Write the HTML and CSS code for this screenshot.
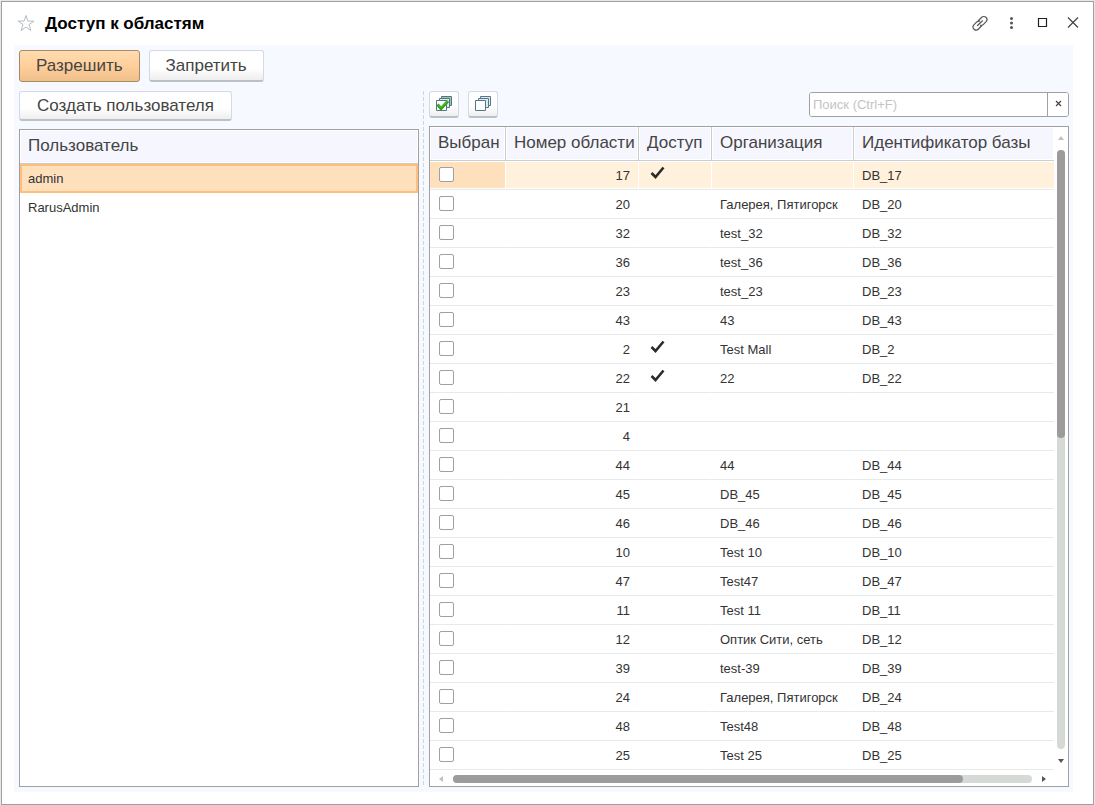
FILE: index.html
```html
<!DOCTYPE html>
<html lang="ru">
<head>
    <meta charset="UTF-8">
    <meta name="viewport" content="width=device-width, initial-scale=1.0">
    <title>Доступ к областям</title>
    <link rel="stylesheet" href="styles.css">
</head>
<body>
    <div class="window">
        <header class="titlebar">
            <button class="icon-button" type="button" aria-label="В избранное">
                <svg width="18" height="18" viewBox="0 0 18 18" fill="none" stroke="#b4bcc4"><path d="M9 0.500l1.900 5.600h6L12 9.600l1.900 5.900L9 12 4.100 15.500 6 9.600 1.100 6.100h6z"/></svg>
            </button>
            <h1>Доступ к областям</h1>
            <div class="window-tools">
                <button class="icon-button" type="button" aria-label="Ссылка">
                    <svg width="18" height="18" viewBox="0 0 18 18" fill="none" stroke="#555" stroke-width="1.2" stroke-linecap="round"><path d="M7.500 5.500l3-3a3 3 0 0 1 4.600 4.200L12 9.800c-.8.6-1.600.8-2.500.6M10.500 11l-3 3a3 3 0 0 1-4.600-4.200L6 6.700c.8-.6 1.600-.8 2.500-.6M6.500 10.500l5-4.700"/></svg>
                </button>
                <button class="icon-button" type="button" aria-label="Ещё">
                    <svg width="18" height="18" viewBox="0 0 18 18" fill="#555"><circle cx="9.500" cy="3.500" r="1.500"/><circle cx="9.500" cy="8" r="1.500"/><circle cx="9.500" cy="12.500" r="1.500"/></svg>
                </button>
                <button class="icon-button" type="button" aria-label="Развернуть">
                    <svg width="18" height="18" viewBox="0 0 18 18" fill="none" stroke="#222" stroke-width="1.200"><path d="M5.500 3.500h8v8h-8z"/></svg>
                </button>
                <button class="icon-button" type="button" aria-label="Закрыть">
                    <svg width="18" height="18" viewBox="0 0 18 18" fill="none" stroke="#444" stroke-width="1.200"><path d="M4 2.500l10 10M14 2.500l-10 10"/></svg>
                </button>
            </div>
        </header>

        <main class="panel">
            <div class="commands">
                <button class="button primary" type="button">Разрешить</button>
                <button class="button" type="button">Запретить</button>
            </div>

            <div class="columns">
                <section class="users">
                    <div class="commands">
                        <button class="button small" type="button">Создать пользователя</button>
                    </div>
                    <div class="list">
                        <table class="grid">
                            <thead>
                                <tr><th>Пользователь</th></tr>
                            </thead>
                            <tbody>
                                <tr class="current"><td>admin</td></tr>
                                <tr><td>RarusAdmin</td></tr>
                            </tbody>
                        </table>
                    </div>
                </section>

                <div class="splitter"></div>

                <section class="areas">
                    <div class="toolbar">
                        <button class="button square" type="button" aria-label="Выбрать все">
                            <svg width="16" height="16" viewBox="0 0 16 16" fill="#fff" stroke="#53788c"><path fill="#9fc79a" d="M5.500.5h10v9h-10z"/><path fill="#dfeaea" d="M3.500 2.500h10v9h-10z"/><path d="M.5 4.500h10v10H.5z"/><path d="M1.500 8.500l3.500 4L12 5" fill="none" stroke="#2f9a14" stroke-width="3"/><path d="M2 8.500l3 3L11.500 5" fill="none" stroke="#67d334"/></svg>
                        </button>
                        <button class="button square" type="button" aria-label="Снять выбор">
                            <svg width="16" height="16" viewBox="0 0 16 16" fill="#fff" stroke="#53788c"><path fill="#dfe9ef" d="M5.500.5h10v9h-10z"/><path fill="#dfe9ef" d="M3.500 2.500h10v9h-10z"/><path d="M.5 4.500h10v10H.5z"/></svg>
                        </button>
                        <form class="search">
                            <input type="text" aria-label="Поиск" placeholder="Поиск (Ctrl+F)">
                            <button type="button" aria-label="Очистить">
                                <svg width="7" height="7" viewBox="0 0 7 7" stroke="#444" stroke-width="1.200"><path d="M1 1l5 5M6 1L1 6"/></svg>
                            </button>
                        </form>
                    </div>

                    <div class="list scrollable">
                        <table class="grid">
                            <colgroup>
                                <col class="col-check">
                                <col class="col-number">
                                <col class="col-access">
                                <col class="col-org">
                                <col>
                            </colgroup>
                            <thead>
                                <tr>
                                    <th>Выбран</th>
                                    <th>Номер области</th>
                                    <th>Доступ</th>
                                    <th>Организация</th>
                                    <th>Идентификатор базы</th>
                                </tr>
                            </thead>
                            <tbody id="areas"></tbody>
                        </table>
                        <div class="scroll vertical">
                            <span class="arrow up"></span>
                            <div class="track"><div class="thumb"></div></div>
                            <span class="arrow down"></span>
                        </div>
                        <div class="scroll horizontal">
                            <span class="arrow left"></span>
                            <div class="track"><div class="thumb"></div></div>
                            <span class="arrow right"></span>
                        </div>
                    </div>
                </section>
            </div>
        </main>
    </div>

    <script src="script.js"></script>
</body>
</html>
```

FILE: styles.css
```css
* {
    box-sizing: border-box;
}
body {
    margin: 0;
    padding: 1px;
    min-height: 100vh;
    display: flex;
    background: #e4e8e8;
    font-family: "Liberation Sans", Arial, sans-serif;
    font-size: 13px;
    color: #333;
}
button, input {
    font: inherit;
    color: inherit;
}
.window {
    flex: 1;
    display: flex;
    flex-direction: column;
    background: #fff;
    border: 1px solid #a0a0a0;
    padding: 0 20px 12px 12px;
}
.titlebar {
    display: flex;
    align-items: center;
    gap: 10px;
    height: 43px;
    padding-left: 3px;
}
.titlebar h1 {
    margin: 0;
    font-size: 17px;
    color: #000;
}
.window-tools {
    display: flex;
    gap: 13px;
    margin-left: auto;
    margin-right: -9px;
}
.icon-button {
    display: flex;
    padding: 0;
    border: none;
    background: none;
    cursor: pointer;
}
.panel {
    flex: 1;
    display: flex;
    flex-direction: column;
    gap: 9px;
    padding: 5px 4px 5px 5px;
    background: #f6f9ff;
}
.commands {
    display: flex;
    gap: 9px;
}
.button {
    height: 32px;
    padding: 0 16px;
    border: 1px solid #d3dae6;
    border-bottom: 2px solid #bcc1c9;
    border-radius: 3px;
    background: linear-gradient(#fff 60%, #eeeeee);
    font-size: 17px;
    color: #444;
    cursor: pointer;
}
.button.primary {
    border: 1px solid #a98a62;
    background: linear-gradient(#ffdcb0, #ffcf9b 50%, #efbf8c);
}
.button.small {
    height: 30px;
    padding: 0 17px;
}
.button.square {
    display: flex;
    align-items: center;
    justify-content: center;
    width: 30px;
    height: 27px;
    padding: 0;
}
.columns {
    flex: 1;
    display: flex;
}
.users {
    flex: 400;
    display: flex;
    flex-direction: column;
    gap: 8px;
}
.splitter {
    width: 10px;
    background: repeating-linear-gradient(#cfd6da 0 4px, transparent 4px 6px) 4px 0 / 1px 100% no-repeat;
}
.areas {
    flex: 640;
    display: flex;
    flex-direction: column;
    gap: 8px;
}
.toolbar {
    display: flex;
    align-items: center;
    gap: 9px;
}
.search {
    display: flex;
    width: 260px;
    height: 25px;
    margin-left: auto;
    border: 1px solid #a0a0a0;
    border-radius: 3px;
    background: #fff;
    overflow: hidden;
}
.search input {
    flex: 1;
    min-width: 0;
    padding: 0 3px;
    border: none;
    outline: none;
}
.search input::placeholder {
    color: #c4c4c4;
}
.search button {
    display: flex;
    align-items: center;
    justify-content: center;
    width: 21px;
    padding: 0 0 2px;
    border: none;
    border-left: 1px solid #a0a0a0;
    background: #fff;
}
.list {
    flex: 1;
    border: 1px solid #a0a0a0;
    background: #fff;
}
.scrollable {
    display: grid;
    grid-template-columns: 1fr 14px;
    grid-template-rows: 1fr 16px;
}

/* tables */
.grid {
    width: 100%;
    border-collapse: separate;
    border-spacing: 0;
    table-layout: fixed;
    align-self: start;
}
.grid th {
    height: 34px;
    padding: 0 8px 2px;
    border-bottom: 1px solid #c9ced0;
    border-right: 1px solid #c9ced0;
    background: #f6f6ff;
    box-shadow: inset 0 0 0 1px #fff;
    font-size: 17px;
    font-weight: normal;
    color: #444;
    text-align: left;
    white-space: nowrap;
}
.grid td {
    height: 29px;
    padding: 0 8px;
    border-bottom: 1px solid #e6eaea;
    border-right: 1px solid #fff;
    white-space: nowrap;
}
.grid th:last-child,
.grid td:last-child {
    border-right: none;
}
.users .grid td {
    border-bottom: none;
}
.users .current td {
    background: #ffe0bd;
    box-shadow: inset 0 0 0 2px #ffbf7c;
}
.areas .current td {
    background: #fff1dc;
    box-shadow: inset 0 1px #fff, inset 0 -1px #fff;
}
.areas .current td:first-child {
    background: #ffe0bd;
}
.col-check {
    width: 76px;
}
.col-number {
    width: 133px;
}
.col-access {
    width: 73px;
}
.col-org {
    width: 142px;
}
.grid td.number {
    text-align: right;
}
.grid input {
    appearance: none;
    display: block;
    width: 15px;
    height: 15px;
    margin: 0 0 2px 1px;
    border: 1px solid #a0a0a0;
    border-radius: 2px;
    background: #fff;
}
.grid svg {
    display: block;
    margin: 0 0 6px 3px;
}

/* scrollbars */
.scroll {
    display: flex;
    align-items: center;
}
.vertical {
    flex-direction: column;
    gap: 10px;
    padding: 9px 0 7px;
}
.horizontal {
    gap: 10px;
    padding: 1px 8px 0 9px;
}
.track {
    flex: 1;
    width: 8px;
    border-radius: 4px;
    background: #d5dad6;
}
.horizontal .track {
    height: 8px;
}
.thumb {
    height: 48%;
    border-radius: 4px;
    background: #9c9c9c;
}
.horizontal .thumb {
    width: 88%;
    height: 8px;
}
.arrow {
    border: 3px solid transparent;
}
.arrow.up {
    border-top: none;
    border-bottom: 4px solid #c0c0c0;
}
.arrow.down {
    border-bottom: none;
    border-top: 4px solid #555;
}
.arrow.left {
    border-left: none;
    border-right: 4px solid #c0c0c0;
}
.arrow.right {
    border-right: none;
    border-left: 4px solid #555;
}
```

FILE: script.js
```js
const areas = [
    { number: 17, access: true, org: '', base: 'DB_17' },
    { number: 20, org: 'Галерея, Пятигорск', base: 'DB_20' },
    { number: 32, org: 'test_32', base: 'DB_32' },
    { number: 36, org: 'test_36', base: 'DB_36' },
    { number: 23, org: 'test_23', base: 'DB_23' },
    { number: 43, org: '43', base: 'DB_43' },
    { number: 2, access: true, org: 'Test Mall', base: 'DB_2' },
    { number: 22, access: true, org: '22', base: 'DB_22' },
    { number: 21, org: '', base: '' },
    { number: 4, org: '', base: '' },
    { number: 44, org: '44', base: 'DB_44' },
    { number: 45, org: 'DB_45', base: 'DB_45' },
    { number: 46, org: 'DB_46', base: 'DB_46' },
    { number: 10, org: 'Test 10', base: 'DB_10' },
    { number: 47, org: 'Test47', base: 'DB_47' },
    { number: 11, org: 'Test 11', base: 'DB_11' },
    { number: 12, org: 'Оптик Сити, сеть', base: 'DB_12' },
    { number: 39, org: 'test-39', base: 'DB_39' },
    { number: 24, org: 'Галерея, Пятигорск', base: 'DB_24' },
    { number: 48, org: 'Test48', base: 'DB_48' },
    { number: 25, org: 'Test 25', base: 'DB_25' }
];

const check = '<svg width="15" height="13" viewBox="0 0 15 13" fill="none" stroke="#2b2b2b" stroke-width="2.6"><path d="M1.500 7l4 4L13.500 1.500"/></svg>';

document.getElementById('areas').innerHTML = areas.map((area, i) => `
    <tr class="${i === 0 ? 'current' : ''}">
        <td><input type="checkbox" aria-label="Выбрать область ${area.number}"></td>
        <td class="number">${area.number}</td>
        <td>${area.access ? check : ''}</td>
        <td>${area.org}</td>
        <td>${area.base}</td>
    </tr>`).join('');
```
